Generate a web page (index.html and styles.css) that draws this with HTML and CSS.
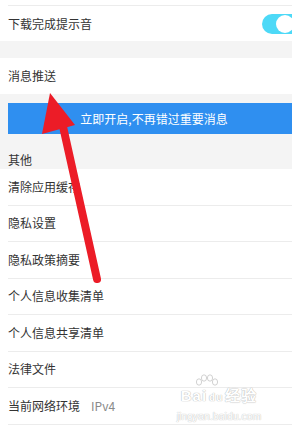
FILE: index.html
```html
<!DOCTYPE html>
<html lang="zh-CN">

<head>
  <meta charset="UTF-8">
  <meta name="viewport" content="width=device-width, initial-scale=1.0">
  <title>设置</title>
  <link rel="stylesheet" href="styles.css">
</head>

<body>
  <div class="page">
    <!-- Download settings -->
    <div class="group">
      <div class="stub"></div>
      <div class="row row-first">
        <span class="label">下载完成提示音</span>
        <span class="toggle"><span class="knob"></span></span>
      </div>
    </div>

    <div class="gap"></div>

    <!-- Push -->
    <div class="group">
      <div class="row row-push">
        <span class="label">消息推送</span>
      </div>
    </div>
    <div class="notice">
      <div class="banner">立即开启,不再错过重要消息</div>
    </div>

    <div class="section-title">其他</div>

    <div class="group">
      <div class="row list-row"><span class="label">清除应用缓存</span></div>
      <div class="row list-row"><span class="label">隐私设置</span></div>
      <div class="row list-row"><span class="label">隐私政策摘要</span></div>
      <div class="row list-row"><span class="label">个人信息收集清单</span></div>
      <div class="row list-row"><span class="label">个人信息共享清单</span></div>
      <div class="row list-row"><span class="label">法律文件</span></div>
      <div class="row list-row">
        <span class="label">当前网络环境</span>
        <span class="value">IPv4</span>
      </div>
      <div class="tail"></div>
    </div>

    <!-- Watermark -->
    <div class="watermark">
      <svg class="paw" width="26" height="17" viewBox="0 0 26 17">
        <g fill="#fff" stroke="#d2d2d2" stroke-width="1">
          <ellipse cx="5" cy="8" rx="2.6" ry="3.2" />
          <ellipse cx="10" cy="4" rx="2.6" ry="3.2" />
          <ellipse cx="16" cy="4" rx="2.6" ry="3.2" />
          <ellipse cx="21" cy="8" rx="2.6" ry="3.2" />
        </g>
      </svg>
      <div class="wm-brand"><span>Bai</span><span class="wm-du">du</span><span>经验</span></div>
      <div class="wm-url">jingyan.baidu.com</div>
    </div>

    <!-- Red arrow overlay -->
    <svg class="arrow" width="292" height="429" viewBox="0 0 292 429">
      <line x1="62" y1="122" x2="97" y2="279" stroke="#ec1c27" stroke-width="8" stroke-linecap="round" />
      <polygon points="50,93 42,134 75,125" fill="#ec1c27" />
    </svg>
  </div>
</body>

</html>
```

FILE: styles.css
```css
* {
  margin: 0;
  padding: 0;
  box-sizing: border-box;
}

body {
  font-family: "Noto Sans CJK SC", "Noto Sans", sans-serif;
  font-size: 12px;
  color: #333;
  background-color: #f4f4f4;
}

.page {
  position: relative;
  width: 292px;
  height: 429px;
  overflow: hidden;
}

.group {
  background-color: #fff;
  padding-left: 8px;
}

.stub {
  height: 6px;
  border-bottom: 1px solid #ececec;
}

.row {
  display: flex;
  align-items: center;
  height: 36px;
}

.row-first {
  height: 35px;
}

.list-row {
  height: 36.5px;
  border-bottom: 1px solid #ececec;
}

.label {
  line-height: 18px;
  color: #333;
}

.value {
  margin-left: 11px;
  color: #8a8a8a;
}

.tail {
  height: 6px;
}

.gap {
  height: 17px;
}

.toggle {
  position: relative;
  margin-left: auto;
  margin-right: -20px;
  width: 50px;
  height: 20px;
  border-radius: 10px;
  background-color: #4dd9f7;
}

.knob {
  position: absolute;
  top: 1px;
  left: 14px;
  width: 18px;
  height: 18px;
  border-radius: 50%;
  background-color: #fff;
}

.notice {
  padding: 9px 0 0 8px;
}

.banner {
  height: 31px;
  line-height: 31px;
  padding-left: 8px;
  background-color: #2f8ff0;
  color: #fff;
  text-align: center;
}

.section-title {
  padding: 17px 0 0 8px;
  height: 35px;
  line-height: 18px;
}

/* faint watermark in the corner */
.watermark {
  position: absolute;
  left: 174px;
  top: 374px;
  width: 90px;
  color: #fff;
  text-align: center;
}

.paw {
  display: block;
  margin: 0 0 -3px 20px;
}

.wm-brand {
  font-family: "Liberation Sans", sans-serif;
  font-size: 15px;
  line-height: 16px;
  font-weight: bold;
  text-shadow: 0 0 1px #b8b8b8, 0 0 1px #b8b8b8;
  letter-spacing: 1px;
  white-space: nowrap;
}

.wm-du {
  font-size: 10px;
  margin: 0 2px;
}

.wm-url {
  font-family: "Liberation Sans", sans-serif;
  font-size: 10.5px;
  line-height: 14px;
  margin-top: 3px;
  text-shadow: 0 0 1px #c4c4c4, 0 0 1px #c4c4c4;
}

.arrow {
  position: absolute;
  left: 0;
  top: 0;
}
```
